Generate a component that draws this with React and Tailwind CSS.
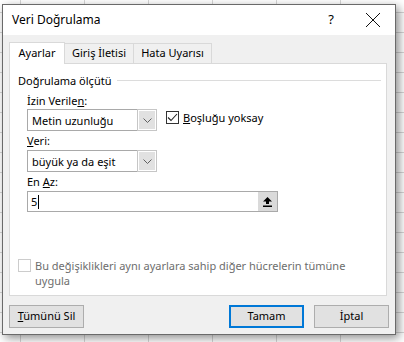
import React from "react";

const font = { fontFamily: '"Noto Sans", "Open Sans", sans-serif' };

const Chevron = () => (
  <svg width="9" height="5" viewBox="0 0 9 5" fill="none">
    <path d="M0.5 0.5 L4.5 4.5 L8.5 0.5" stroke="#606060" strokeWidth="1" />
  </svg>
);

const Select = ({ value }) => (
  <div className="flex h-[22px] w-[130px] border border-[#a9a9a9] bg-white">
    <div className="flex flex-1 items-center pl-[4px] text-[11px] text-black">{value}</div>
    <div className="flex w-[18px] items-center justify-center border border-white bg-[#e1e1e1] outline outline-1 outline-[#c6c6c6]">
      <Chevron />
    </div>
  </div>
);

const Button = ({ children, primary }) => (
  <div
    className={
      "flex h-[23px] w-[75px] items-center justify-center bg-[#e1e1e1] text-[11px] text-black " +
      (primary ? "border-2 border-[#0078d7]" : "border border-[#adadad]")
    }
  >
    {children}
  </div>
);

export default function App() {
  return (
    <div
      className="h-[342px] w-[404px] overflow-hidden bg-white bg-[linear-gradient(to_bottom,transparent_19px,#d6d6d6_19px),linear-gradient(to_right,transparent_63px,#d6d6d6_63px)] bg-[size:100%_20px,64px_100%] bg-[position:0_13px,21px_0] pl-[2px] pt-[4px]"
      style={font}
    >
      <div className="flex h-[331px] w-[394px] flex-col border border-[#6a6a6a] bg-[#f0f0f0] shadow-[3px_3px_9px_rgba(0,0,0,0.45)]">
        {/* title bar */}
        <div className="flex h-[30px] items-center bg-white pl-[9px] text-[12px] text-black">
          <span className="flex-1">Veri Doğrulama</span>
          <span className="mr-[31px] text-[13px]">?</span>
          <svg width="16" height="16" viewBox="0 0 16 16" className="mr-[14px]">
            <path d="M1 1 L15 15 M15 1 L1 15" stroke="#111" strokeWidth="1" />
          </svg>
        </div>

        <div className="flex flex-1 flex-col px-[6px] pt-[7px]">
          {/* tabs */}
          <div className="flex h-[21px] items-end text-[11px] text-black">
            <div className="relative z-10 -mb-px flex h-[22px] w-[56px] items-center justify-center border border-b-0 border-[#d9d9d9] bg-white pb-[1px]">
              Ayarlar
            </div>
            <div className="flex h-[20px] w-[69px] items-center justify-center border border-l-0 border-b-0 border-[#d9d9d9]">
              Giriş İletisi
            </div>
            <div className="flex h-[20px] w-[78px] items-center justify-center border border-l-0 border-b-0 border-[#d9d9d9]">
              Hata Uyarısı
            </div>
          </div>

          {/* panel */}
          <div className="flex h-[233px] w-[378px] flex-col border border-[#d9d9d9] bg-white text-[11px] leading-[15px] text-black">
            <div className="mt-[9px] flex items-center pl-[8px]">
              <span>Doğrulama ölçütü</span>
              <div className="ml-[6px] mr-[5px] h-px flex-1 bg-[#dcdcdc]" />
            </div>

            <div className="ml-[17px] mt-[5px]">
              İzin Verile<span className="underline">n</span>:
            </div>
            <div className="ml-[17px] mt-[1px] flex items-start">
              <Select value="Metin uzunluğu" />
              <div className="ml-[9px] flex items-center pt-[1px]">
                <div className="flex h-[13px] w-[13px] items-center justify-center border border-[#333]">
                  <svg width="11" height="9" viewBox="0 0 11 9" fill="none">
                    <path d="M1 4.5 L4 7.5 L10 1" stroke="#222" strokeWidth="1.1" />
                  </svg>
                </div>
                <span className="ml-[4px]">
                  <span className="underline">B</span>oşluğu yoksay
                </span>
              </div>
            </div>

            <div className="ml-[17px] mt-[2px]">
              <span className="underline">V</span>eri:
            </div>
            <div className="ml-[17px] mt-[2px]">
              <Select value="büyük ya da eşit" />
            </div>

            <div className="ml-[17px] mt-[2px]">
              En <span className="underline">A</span>z:
            </div>
            <div className="ml-[17px] mt-[2px] flex h-[21px] w-[251px] border border-[#a9a9a9] bg-white">
              <div className="flex flex-1 items-center pl-[3px]">
                <span>5</span>
                <span className="ml-px h-[14px] w-px bg-black" />
              </div>
              <div className="flex w-[19px] items-center justify-center bg-[#dadada]">
                <svg width="9" height="10" viewBox="0 0 9 10">
                  <path d="M4.5 0 L9 4.5 L6 4.5 L6 7 L3 7 L3 4.5 L0 4.5 Z" fill="#000" />
                  <rect x="0" y="8.5" width="9" height="1.5" fill="#000" />
                </svg>
              </div>
            </div>

            <div className="ml-[8px] mt-[46px] flex items-start text-[#6d6d6d]">
              <div className="mt-px h-[13px] w-[13px] shrink-0 border border-[#cccccc]" />
              <div className="ml-[4px]">
                Bu değişiklikleri aynı ayarlara sahip diğer hücrelerin tümüne
                <br />
                uygula
              </div>
            </div>
          </div>

          {/* footer */}
          <div className="mt-[9px] flex w-[380px] items-center">
            <Button>
              <span>
                <span className="underline">T</span>ümünü Sil
              </span>
            </Button>
            <div className="flex-1" />
            <Button primary>Tamam</Button>
            <div className="ml-[10px]">
              <Button>İptal</Button>
            </div>
          </div>
        </div>
      </div>
    </div>
  );
}
